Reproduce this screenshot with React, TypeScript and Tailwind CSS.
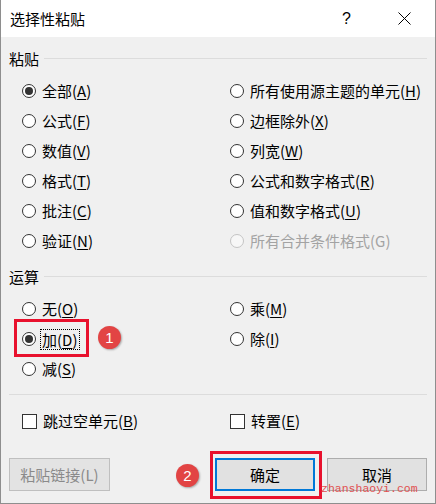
import React from "react";

function Radio({ checked = false, disabled = false }: { checked?: boolean; disabled?: boolean }) {
  return (
    <span
      className={
        disabled
          ? "w-[14px] h-[14px] rounded-full border border-[#c4c4c4] bg-[#f7f7f7] flex items-center justify-center shrink-0"
          : "w-[14px] h-[14px] rounded-full border border-[#333333] bg-white flex items-center justify-center shrink-0"
      }
    >
      {checked && <span className="w-[8px] h-[8px] rounded-full bg-[#333333]" />}
    </span>
  );
}

function Check() {
  return <span className="w-[15px] h-[15px] border border-[#333333] bg-white shrink-0" />;
}

type Opt = { label: string; key: string; checked?: boolean; disabled?: boolean; focus?: boolean };

function Label({ o }: { o: Opt }) {
  const inner = (
    <>
      {o.label}(
      {o.disabled ? o.key : <span className="underline underline-offset-[2px] decoration-1">{o.key}</span>})
    </>
  );
  if (o.focus) {
    return (
      <span className="-ml-[2px] px-[1px] border border-dotted border-black leading-[19px]">{inner}</span>
    );
  }
  return <span className={o.disabled ? "text-[#a3a3a3]" : "text-black"}>{inner}</span>;
}

function RadioRow({ o }: { o: Opt }) {
  return (
    <div className="h-[30px] flex items-center gap-[6px]">
      <Radio checked={o.checked} disabled={o.disabled} />
      <Label o={o} />
    </div>
  );
}

function Header({ text, className }: { text: string; className: string }) {
  return (
    <div className={"h-[20px] flex items-center " + className}>
      <span className="text-black">{text}</span>
      <span className="ml-[5px] flex-1 h-px bg-[#dcdcdc] -mt-[1px]" />
    </div>
  );
}

export default function App() {
  const pasteLeft: Opt[] = [
    { label: "全部", key: "A", checked: true },
    { label: "公式", key: "F" },
    { label: "数值", key: "V" },
    { label: "格式", key: "T" },
    { label: "批注", key: "C" },
    { label: "验证", key: "N" },
  ];
  const pasteRight: Opt[] = [
    { label: "所有使用源主题的单元", key: "H" },
    { label: "边框除外", key: "X" },
    { label: "列宽", key: "W" },
    { label: "公式和数字格式", key: "R" },
    { label: "值和数字格式", key: "U" },
    { label: "所有合并条件格式", key: "G", disabled: true },
  ];
  const opLeft: Opt[] = [
    { label: "无", key: "O" },
    { label: "加", key: "D", checked: true, focus: true },
    { label: "减", key: "S" },
  ];
  const opRight: Opt[] = [
    { label: "乘", key: "M" },
    { label: "除", key: "I" },
  ];

  return (
    <div className="relative w-[436px] h-[504px] border-x border-b border-[#8e8e8e] flex flex-col overflow-hidden font-['Noto_Sans_CJK_SC','Microsoft_YaHei',sans-serif] text-[15px] leading-[20px]">
      <div className="h-[37px] shrink-0 bg-white flex items-center pl-[9px]">
        <span className="text-[15px] text-black">选择性粘贴</span>
        <div className="ml-auto flex items-center">
          <span className="mr-[47px] text-[16px] font-['Liberation_Sans',sans-serif] text-black">?</span>
          <svg width="13" height="13" viewBox="0 0 13 13" className="mr-[24px]">
            <path d="M0.5 0.5 L12.5 12.5 M12.5 0.5 L0.5 12.5" stroke="#000" strokeWidth="1" />
          </svg>
        </div>
      </div>

      <div className="flex-1 bg-[#f0f0f0] px-[8px] flex flex-col">
        <Header text="粘贴" className="mt-[12px]" />
        <div className="mt-[7px] grid grid-cols-[208px_1fr] pl-[13px]">
          <div className="flex flex-col">
            {pasteLeft.map((o) => (
              <RadioRow key={o.key} o={o} />
            ))}
          </div>
          <div className="flex flex-col">
            {pasteRight.map((o) => (
              <RadioRow key={o.key} o={o} />
            ))}
          </div>
        </div>

        <Header text="运算" className="mt-[11px]" />
        <div className="mt-[7px] grid grid-cols-[208px_1fr] pl-[13px]">
          <div className="flex flex-col">
            {opLeft.map((o) => (
              <RadioRow key={o.key} o={o} />
            ))}
          </div>
          <div className="flex flex-col">
            {opRight.map((o) => (
              <RadioRow key={o.key} o={o} />
            ))}
          </div>
        </div>

        <div className="mt-[10px] h-px bg-[#dcdcdc]" />

        <div className="mt-[11px] grid grid-cols-[208px_1fr] pl-[13px]">
          <div className="h-[30px] flex items-center gap-[6px]">
            <Check />
            <span>
              跳过空单元(<span className="underline underline-offset-[2px]">B</span>)
            </span>
          </div>
          <div className="h-[30px] flex items-center gap-[6px]">
            <Check />
            <span>
              转置(<span className="underline underline-offset-[2px]">E</span>)
            </span>
          </div>
        </div>

        <div className="mt-[22px] flex items-center">
          <button className="w-[101px] h-[33px] border border-[#bfbfbf] bg-[#e3e3e3] text-[#8a8a8a] flex items-center justify-center">
            粘贴链接(L)
          </button>
          <button className="ml-auto mr-[12px] w-[100px] h-[33px] border-2 border-[#0078d7] bg-[#e1e1e1] text-black flex items-center justify-center">
            确定
          </button>
          <button className="w-[100px] h-[33px] border border-[#adadad] bg-[#e1e1e1] text-black flex items-center justify-center">
            取消
          </button>
        </div>
      </div>

      {/* annotations */}
      <div className="absolute left-[13px] top-[319px] w-[75px] h-[38px] border-[3px] border-[#e8112d]" />
      <div className="absolute left-[209px] top-[451px] w-[112px] h-[48px] border-[3px] border-[#e8112d]" />
      <div className="absolute left-[97px] top-[326px] w-[23px] h-[23px] rounded-full bg-[#e24444] shadow-[1px_1px_2px_rgba(0,0,0,0.3)] flex items-center justify-center text-white text-[15px] font-['Liberation_Sans',sans-serif]">
        1
      </div>
      <div className="absolute left-[175px] top-[464px] w-[23px] h-[23px] rounded-full bg-[#e24444] shadow-[1px_1px_2px_rgba(0,0,0,0.3)] flex items-center justify-center text-white text-[15px] font-['Liberation_Sans',sans-serif]">
        2
      </div>
      <div className="absolute left-[320px] top-[481px] text-[11.5px] leading-[16px] text-[#e05050] font-['Liberation_Mono',monospace]">
        zhanshaoyi.com
      </div>
    </div>
  );
}
